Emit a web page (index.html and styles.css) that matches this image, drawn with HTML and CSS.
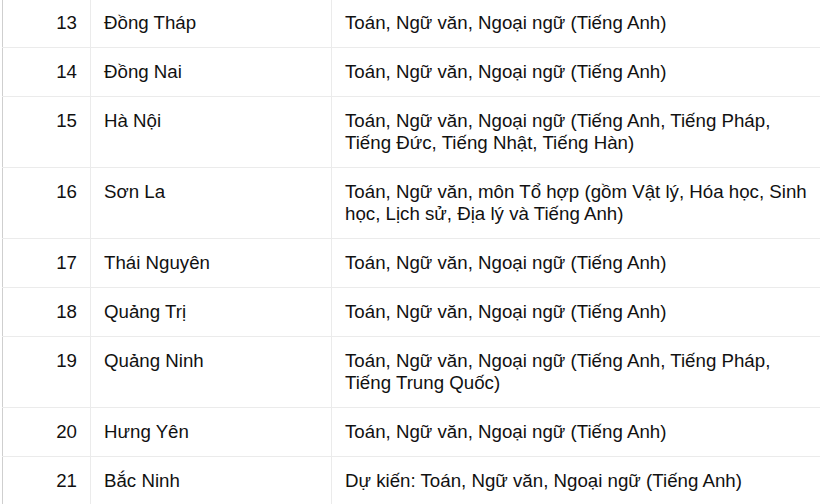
FILE: index.html
```html
<!DOCTYPE html>
<html lang="vi">
<head>
<meta charset="utf-8">
<link rel="stylesheet" href="styles.css">
</head>
<body>
<div class="wrap">
<table class="tbl">
  <colgroup><col class="c-num"><col class="c-name"><col class="c-subj"></colgroup>
  <tbody>
    <tr><td class="num">13</td><td>Đồng Tháp</td><td>Toán, Ngữ văn, Ngoại ngữ (Tiếng Anh)</td></tr>
    <tr><td class="num">14</td><td>Đồng Nai</td><td>Toán, Ngữ văn, Ngoại ngữ (Tiếng Anh)</td></tr>
    <tr><td class="num">15</td><td>Hà Nội</td><td>Toán, Ngữ văn, Ngoại ngữ (Tiếng Anh, Tiếng Pháp,<br>Tiếng Đức, Tiếng Nhật, Tiếng Hàn)</td></tr>
    <tr><td class="num">16</td><td>Sơn La</td><td>Toán, Ngữ văn, môn Tổ hợp (gồm Vật lý, Hóa học, Sinh<br>học, Lịch sử, Địa lý và Tiếng Anh)</td></tr>
    <tr><td class="num">17</td><td>Thái Nguyên</td><td>Toán, Ngữ văn, Ngoại ngữ (Tiếng Anh)</td></tr>
    <tr><td class="num">18</td><td>Quảng Trị</td><td>Toán, Ngữ văn, Ngoại ngữ (Tiếng Anh)</td></tr>
    <tr><td class="num">19</td><td>Quảng Ninh</td><td>Toán, Ngữ văn, Ngoại ngữ (Tiếng Anh, Tiếng Pháp,<br>Tiếng Trung Quốc)</td></tr>
    <tr><td class="num">20</td><td>Hưng Yên</td><td>Toán, Ngữ văn, Ngoại ngữ (Tiếng Anh)</td></tr>
    <tr><td class="num">21</td><td>Bắc Ninh</td><td>Dự kiến: Toán, Ngữ văn, Ngoại ngữ (Tiếng Anh)</td></tr>
  </tbody>
</table>
</div>
</body>
</html>
```
FILE: styles.css
```css
html, body {
  margin: 0;
  padding: 0;
  background: #ffffff;
  overflow: hidden;
}
.wrap {
  width: 820px;
  height: 504px;
  overflow: hidden;
}
.tbl {
  border-collapse: collapse;
  margin: -2px 0 0 2px;
  table-layout: fixed;
  width: 819px;
  font-family: "Liberation Sans", Arial, sans-serif;
  font-size: 18.7px;
  line-height: 22px;
  color: #111111;
}
.c-num { width: 88px; }
.c-name { width: 241px; }
.c-subj { width: 490px; }
.tbl td {
  border: 1px solid #ebebeb;
  padding: 13px 13px 13px 13px;
  vertical-align: top;
  white-space: nowrap;
}
.tbl td:first-child {
  border-left-color: #cfcfcf;
}
.tbl td:last-child {
  border-right-color: transparent;
}
.tbl td.num {
  text-align: right;
  padding-right: 13px;
}
```
